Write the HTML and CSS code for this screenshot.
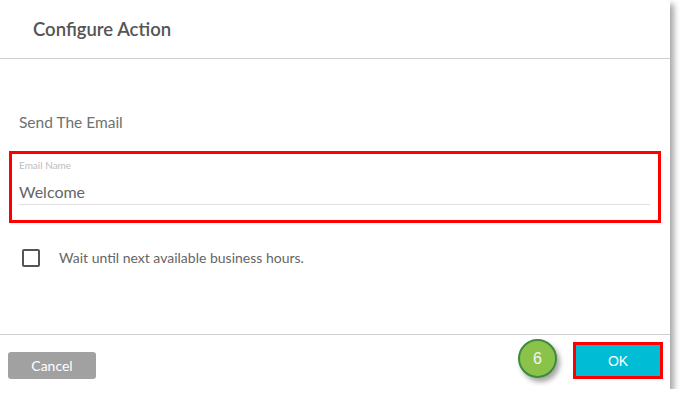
FILE: index.html
```html
<!DOCTYPE html>
<html lang="en">
<head>
  <meta charset="UTF-8">
  <title>Configure Action</title>
  <link rel="stylesheet" href="styles.css">
</head>
<body>
  <div class="dialog">
    <div class="dialog-header">
      <h2>Configure Action</h2>
    </div>

    <div class="dialog-body">
      <div class="section-title">Send The Email</div>

      <div class="field highlight">
        <label for="emailName">Email Name</label>
        <input type="text" id="emailName" value="Welcome">
      </div>

      <label class="check-row">
        <span class="checkbox"></span>
        <span>Wait until next available business hours.</span>
      </label>
    </div>

    <div class="dialog-footer">
      <button class="btn-cancel">Cancel</button>
      <div class="spacer"></div>
      <div class="step">6</div>
      <div class="ok-wrap">
        <button class="btn-ok">OK</button>
      </div>
    </div>
  </div>
</body>
</html>
```

FILE: styles.css
```css
body {
  margin: 0;
  background: #fff;
  font-family: Lato, "Open Sans", sans-serif;
  color: #555;
}
.dialog {
  width: 670px;
  height: 389px;
  background: #fff;
  box-shadow: 4px 4px 6px rgba(0, 0, 0, 0.35);
  display: flex;
  flex-direction: column;
}
.dialog-header {
  height: 58px;
  border-bottom: 1px solid #cfcfcf;
  display: flex;
  align-items: center;
  padding-left: 33px;
}
.dialog-header h2 {
  margin: 0;
  font-size: 18.5px;
  font-weight: 600;
  color: #555;
}
.dialog-body {
  flex: 1;
}
.section-title {
  margin: 53px 0 0 19px;
  font-size: 15.5px;
  line-height: 20px;
  color: #6b7272;
}
.field {
  margin: 19px 0 0 9px;
  width: 652px;
  padding: 5px 8px 15px 7px;
  box-sizing: border-box;
}
.highlight {
  border: 3px solid #f00;
}
.field label {
  display: block;
  font-size: 10px;
  line-height: 12px;
  color: #bdbdbd;
  margin-bottom: 9px;
}
.field input {
  display: block;
  width: 100%;
  box-sizing: border-box;
  border: none;
  border-bottom: 1px solid #e0e0e0;
  padding: 0 0 2px;
  height: 25px;
  font-family: inherit;
  font-size: 16px;
  color: #666;
  outline: none;
}
.check-row {
  display: flex;
  align-items: center;
  gap: 19px;
  margin: 25px 0 0 22px;
  font-size: 14px;
  line-height: 20px;
  color: #666;
}
.checkbox {
  width: 14px;
  height: 14px;
  border: 2px solid #555;
  border-radius: 2px;
}
.dialog-footer {
  height: 54px;
  border-top: 1px solid #cfcfcf;
  display: flex;
  align-items: flex-start;
  padding: 0 7px 0 8px;
}
.spacer {
  flex: 1;
}
.btn-cancel {
  margin-top: 17px;
  width: 88px;
  height: 27px;
  border: none;
  border-radius: 3px;
  background: #a1a1a1;
  color: #fff;
  font-family: Lato, sans-serif;
  font-size: 14px;
  padding: 0;
}
.step {
  margin-top: 4px;
  width: 35px;
  height: 35px;
  border-radius: 50%;
  background: #8bc34a;
  border: 2px solid #3d8b3d;
  box-shadow: 3px 4px 5px rgba(0, 0, 0, 0.35);
  color: #f4f4f4;
  font-family: "Liberation Sans", Arial, sans-serif;
  font-size: 16px;
  display: flex;
  align-items: center;
  justify-content: center;
  margin-right: 16px;
}
.ok-wrap {
  margin-top: 7px;
  border: 3px solid #f00;
}
.btn-ok {
  display: block;
  width: 84px;
  height: 31px;
  border: none;
  background: #00bcd4;
  color: #fff;
  font-family: "Liberation Sans", Arial, sans-serif;
  font-size: 14px;
  padding: 0;
}
```
